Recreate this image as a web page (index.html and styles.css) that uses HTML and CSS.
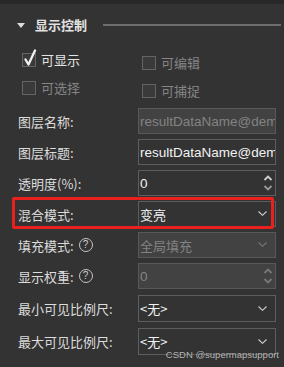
FILE: index.html
```html
<!DOCTYPE html>
<html>
<head>
<meta charset="utf-8">
<link rel="stylesheet" href="styles.css">
</head>
<body>
<div class="panel">
  <div class="topbar"></div>
  <div class="section-head">
    <span class="tri"></span>
    <span class="title">显示控制</span>
    <span class="rule"></span>
  </div>
  <div class="checks">
    <div class="check-col">
      <label class="check on"><span class="box"><svg class="tick" width="14" height="18" viewBox="0 0 14 18"><path d="M2.5 10.5 L5.5 15.5 L12 1.5" fill="none" stroke="#f2f2f2" stroke-width="2.3" stroke-linecap="round" stroke-linejoin="round"/></svg></span><span class="ctext">可显示</span></label>
      <label class="check off"><span class="box"></span><span class="ctext">可选择</span></label>
    </div>
    <div class="check-col right">
      <label class="check off"><span class="box"></span><span class="ctext">可编辑</span></label>
      <label class="check off"><span class="box"></span><span class="ctext">可捕捉</span></label>
    </div>
  </div>
  <div class="form">
    <div class="row">
      <span class="label">图层名称:</span>
      <div class="field disabled"><span class="val">resultDataName@dem</span></div>
    </div>
    <div class="row">
      <span class="label">图层标题:</span>
      <div class="field"><span class="val">resultDataName@dem</span></div>
    </div>
    <div class="row">
      <span class="label">透明度(%):</span>
      <div class="field"><span class="val">0</span>
        <span class="spin"><svg width="10" height="16" viewBox="0 0 10 16"><path d="M1.5 5 L5 1.5 L8.5 5" fill="none" stroke="#cfcfcf" stroke-width="1.8"/><path d="M1.5 11 L5 14.5 L8.5 11" fill="none" stroke="#9a9a9a" stroke-width="1.8"/></svg></span>
      </div>
    </div>
    <div class="row">
      <span class="label">混合模式:</span>
      <div class="field"><span class="val cjk">变亮</span>
        <span class="chev"><svg width="9" height="5" viewBox="0 0 9 5"><path d="M0.5 0.5 L4.5 4.3 L8.5 0.5" fill="none" stroke="#d0d0d0" stroke-width="1.1"/></svg></span>
      </div>
    </div>
    <div class="row">
      <span class="label">填充模式:<span class="help">?</span></span>
      <div class="field disabled"><span class="val cjk">全局填充</span>
        <span class="chev"><svg width="9" height="5" viewBox="0 0 9 5"><path d="M0.5 0.5 L4.5 4.3 L8.5 0.5" fill="none" stroke="#777" stroke-width="1.1"/></svg></span>
      </div>
    </div>
    <div class="row">
      <span class="label">显示权重:<span class="help">?</span></span>
      <div class="field disabled"><span class="val">0</span>
        <span class="spin"><svg width="10" height="16" viewBox="0 0 10 16"><path d="M1.5 5 L5 1.5 L8.5 5" fill="none" stroke="#777" stroke-width="1.8"/><path d="M1.5 11 L5 14.5 L8.5 11" fill="none" stroke="#777" stroke-width="1.8"/></svg></span>
      </div>
    </div>
    <div class="row tall">
      <span class="label">最小可见比例尺:</span>
      <div class="field"><span class="val cjk">&lt;无&gt;</span>
        <span class="chev"><svg width="9" height="5" viewBox="0 0 9 5"><path d="M0.5 0.5 L4.5 4.3 L8.5 0.5" fill="none" stroke="#d0d0d0" stroke-width="1.1"/></svg></span>
      </div>
    </div>
    <div class="row tall">
      <span class="label">最大可见比例尺:</span>
      <div class="field"><span class="val cjk">&lt;无&gt;</span>
        <span class="chev"><svg width="9" height="5" viewBox="0 0 9 5"><path d="M0.5 0.5 L4.5 4.3 L8.5 0.5" fill="none" stroke="#d0d0d0" stroke-width="1.1"/></svg></span>
      </div>
    </div>
  </div>
  <div class="highlight"></div>
  <div class="watermark">CSDN @supermapsupport</div>
</div>
</body>
</html>
```

FILE: styles.css
```css
html, body {
  margin: 0;
  padding: 0;
  background: #333333;
}
body {
  font-family: "Noto Sans CJK SC", "Noto Sans", sans-serif;
  font-size: 13px;
  color: #dedede;
}
.panel {
  position: relative;
  width: 284px;
  height: 367px;
  overflow: hidden;
  background: #333333;
}
.topbar {
  height: 4px;
  background: #282828;
}
.section-head {
  display: flex;
  align-items: center;
  height: 16px;
  margin-top: 13px;
}
.tri {
  width: 0;
  height: 0;
  margin-left: 17px;
  border-left: 4px solid transparent;
  border-right: 4px solid transparent;
  border-top: 5px solid #dcdcdc;
}
.title {
  margin-left: 10px;
  font-weight: bold;
  font-size: 13px;
  line-height: 16px;
  color: #e2e2e2;
}
.rule {
  flex: 1;
  height: 2px;
  margin-left: 16px;
  margin-right: 3px;
  background: #6e6e6e;
}
.checks {
  display: flex;
  margin-top: 20px;
}
.check-col {
  display: flex;
  flex-direction: column;
  gap: 14px;
  margin-left: 22px;
  width: 98px;
}
.check-col.right {
  padding-top: 3px;
  margin-left: 22px;
}
.check {
  display: flex;
  align-items: center;
  height: 14px;
}
.box {
  position: relative;
  width: 12px;
  height: 12px;
  border: 1px solid #646464;
  background: #3a3a3a;
  flex: none;
}
.tick {
  position: absolute;
  left: 0px;
  top: -5px;
}
.ctext {
  margin-left: 5px;
  line-height: 14px;
}
.check.on .ctext { color: #e4e4e4; }
.check.off .ctext { color: #858585; }
.form {
  display: flex;
  flex-direction: column;
  gap: 5px;
  margin-top: 10px;
}
.row {
  display: flex;
  align-items: center;
  height: 26px;
}
.row.tall {
  height: 27px;
  margin-top: 1px;
}
.label {
  display: flex;
  align-items: center;
  width: 138px;
  flex: none;
  padding-left: 18px;
  box-sizing: border-box;
  color: #dcdcdc;
  white-space: nowrap;
}
.help {
  display: inline-flex;
  align-items: center;
  justify-content: center;
  width: 12px;
  height: 12px;
  margin-left: 5px;
  border: 1px solid #c4c4c4;
  border-radius: 50%;
  font-family: "Liberation Sans", sans-serif;
  font-size: 10px;
  line-height: 12px;
  color: #cfcfcf;
}
.field {
  position: relative;
  display: flex;
  align-items: center;
  width: 138px;
  flex: none;
  height: 100%;
  box-sizing: border-box;
  border: 1px solid #5e5e5e;
  background: #333333;
  overflow: hidden;
  padding-left: 1px;
}
.field.disabled {
  background: #424242;
  border-color: #585858;
}
.val {
  font-family: "Liberation Sans", "Noto Sans CJK SC", sans-serif;
  font-size: 13.5px;
  color: #f2f2f2;
  white-space: nowrap;
}
.val.cjk {
  font-family: "Noto Sans CJK SC", sans-serif;
  font-size: 13px;
}
.field.disabled .val { color: #828282; }
.chev {
  position: absolute;
  right: 8px;
  top: 50%;
  margin-top: -3px;
  display: flex;
}
.spin {
  position: absolute;
  right: 2px;
  top: 50%;
  margin-top: -8px;
  display: flex;
}
.highlight {
  position: absolute;
  left: 12px;
  top: 197px;
  width: 262px;
  height: 32px;
  box-sizing: border-box;
  border: 3px solid #e8201e;
  border-radius: 2px;
}
.watermark {
  position: absolute;
  right: 5px;
  top: 349px;
  font-family: "Liberation Sans", sans-serif;
  font-size: 9.5px;
  color: rgba(235, 235, 235, 0.75);
  text-shadow: 0 0 1px rgba(0,0,0,0.5);
}
```
